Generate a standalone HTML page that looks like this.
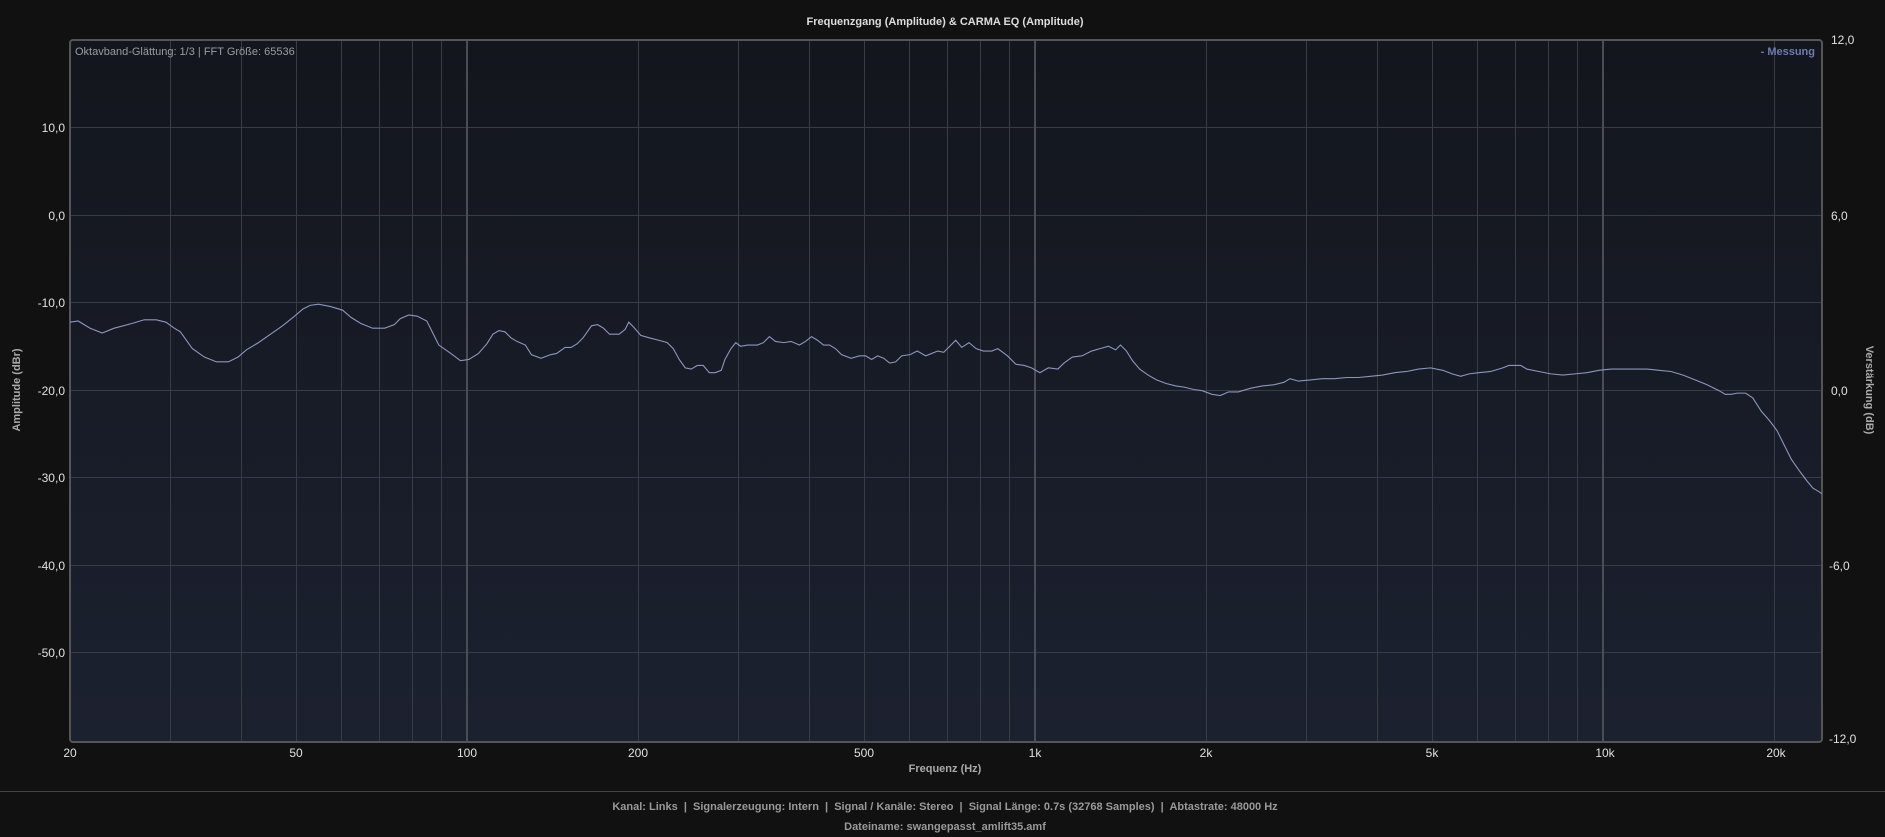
<!DOCTYPE html>
<html><head><meta charset="utf-8"><style>
html,body{margin:0;padding:0;background:#111111;width:1885px;height:837px;overflow:hidden;font-family:"Liberation Sans",sans-serif}
svg{position:absolute;left:0;top:0}
</style></head><body>
<svg width="1885" height="837" viewBox="0 0 1885 837" xmlns="http://www.w3.org/2000/svg">
<defs>
<linearGradient id="bg" x1="0" y1="0" x2="0" y2="1"><stop offset="0" stop-color="#13161d"/><stop offset="1" stop-color="#1c2130"/></linearGradient>
<clipPath id="cp"><rect x="70" y="40" width="1752" height="702"/></clipPath>
</defs>
<rect x="70" y="40" width="1752" height="702" rx="3" fill="url(#bg)"/>
<g stroke="#383c45" stroke-width="1">
<path d="M170.5 40V742M241.5 40V742M296.5 40V742M341.5 40V742M379.5 40V742M412.5 40V742M441.5 40V742M638.5 40V742M738.5 40V742M809.5 40V742M864.5 40V742M909.5 40V742M947.5 40V742M980.5 40V742M1009.5 40V742M1206.5 40V742M1306.5 40V742M1377.5 40V742M1432.5 40V742M1477.5 40V742M1515.5 40V742M1548.5 40V742M1577.5 40V742M1774.5 40V742"/>
<path d="M70 127.5H1822M70 215.5H1822M70 302.5H1822M70 390.5H1822M70 477.5H1822M70 565.5H1822M70 652.5H1822"/>
</g>
<g stroke="#4a4d55" stroke-width="2"><path d="M467 40V742M1035 40V742M1603 40V742"/></g>
<rect x="70" y="40" width="1752" height="702" rx="3" fill="none" stroke="#555" stroke-width="2"/>
<g clip-path="url(#cp)">
<polyline transform="scale(1.2022)" fill="none" stroke="#8e95bd" stroke-width="1.1" vector-effect="non-scaling-stroke" points="58,268 65,267 75,273 85,277 95,273 110,269 120,266 130,266 138,268 145,273 150,276 155,283 160,290 170,297 180,301 190,301 198,297 205,291 215,285 225,278 235,271 245,263 252,257 258,254 265,253 275,255 285,258 292,264 300,269 310,273 320,273 328,270 333,265 340,262 347,263 355,267 360,277 365,287 375,294 383,300 390,299 398,294 405,286 410,278 415,275 420,276 425,281 430,284 437,287 442,295 450,298 458,295 463,294 470,289 475,289 480,286 485,281 492,271 497,270 502,273 507,278 515,278 520,274 523,268 527,272 533,279 540,281 548,283 555,285 560,290 565,299 570,306 575,307 580,304 585,304 590,310 595,310 600,308 603,299 608,290 612,285 616,288 622,287 630,287 635,285 640,280 645,284 652,285 658,284 665,287 670,284 675,280 680,283 685,287 690,287 695,290 700,295 708,298 715,296 720,296 725,299 730,296 735,298 740,302 745,301 750,296 757,295 763,292 770,296 775,294 780,292 785,293 790,288 795,283 800,289 806,285 812,290 818,292 825,292 830,290 838,296 845,303 852,304 858,306 865,310 872,306 880,307 885,302 892,297 900,296 908,292 915,290 922,288 928,291 932,287 937,292 942,300 948,307 955,312 962,316 970,319 978,321 985,322 993,324 1000,325 1008,328 1015,329 1022,326 1030,326 1040,323 1050,321 1060,320 1068,318 1073,315 1080,317 1090,316 1100,315 1110,315 1120,314 1130,314 1140,313 1150,312 1160,310 1170,309 1180,307 1190,306 1200,308 1208,311 1215,313 1222,311 1230,310 1240,309 1250,306 1255,304 1265,304 1270,307 1280,309 1290,311 1300,312 1310,311 1320,310 1330,308 1340,307 1350,307 1360,307 1370,307 1380,308 1390,309 1400,312 1410,316 1420,320 1430,325 1435,328 1440,328 1445,327 1452,327 1458,331 1465,342 1472,350 1478,358 1483,368 1490,382 1497,392 1503,400 1508,406 1513,409 1516,411"/>
</g>
<text x="75" y="55" font-size="11" fill="#9a9ca2">Oktavband-Glättung: 1/3 | FFT Größe: 65536</text>
<text x="1815" y="55" font-size="11" font-weight="bold" fill="#6f7ab0" text-anchor="end">- Messung</text>
<text x="945" y="25" font-size="11" font-weight="bold" fill="#dddddd" text-anchor="middle">Frequenzgang (Amplitude) &amp; CARMA EQ (Amplitude)</text>
<g font-size="12" fill="#e0e0e0" text-anchor="end">
<text x="65" y="132">10,0</text><text x="65" y="220">0,0</text><text x="65" y="307">-10,0</text><text x="65" y="395">-20,0</text><text x="65" y="482">-30,0</text><text x="65" y="570">-40,0</text><text x="65" y="657">-50,0</text>
</g>
<g font-size="12" fill="#e0e0e0">
<text x="1831" y="44">12,0</text><text x="1831" y="220">6,0</text><text x="1831" y="395">0,0</text><text x="1829" y="570">-6,0</text><text x="1829" y="743">-12,0</text>
</g>
<g font-size="12" fill="#e0e0e0" text-anchor="middle">
<text x="70" y="757">20</text><text x="296" y="757">50</text><text x="467" y="757">100</text><text x="638" y="757">200</text><text x="864" y="757">500</text><text x="1035" y="757">1k</text><text x="1206" y="757">2k</text><text x="1432" y="757">5k</text><text x="1605" y="757">10k</text><text x="1776" y="757">20k</text>
</g>
<text x="945" y="772" font-size="11" font-weight="bold" fill="#aaaaaa" text-anchor="middle">Frequenz (Hz)</text>
<text transform="translate(20,390) rotate(-90)" font-size="11" font-weight="bold" fill="#aaaaaa" text-anchor="middle">Amplitude (dBr)</text>
<text transform="translate(1866,390) rotate(90)" font-size="11" font-weight="bold" fill="#aaaaaa" text-anchor="middle">Verstärkung (dB)</text>
<rect x="0" y="791" width="1885" height="1" fill="#444"/>
<text x="945" y="810" font-size="11" font-weight="bold" fill="#999999" text-anchor="middle" xml:space="preserve">Kanal: Links  |  Signalerzeugung: Intern  |  Signal / Kanäle: Stereo  |  Signal Länge: 0.7s (32768 Samples)  |  Abtastrate: 48000 Hz</text>
<text x="945" y="830" font-size="11" font-weight="bold" fill="#999999" text-anchor="middle">Dateiname: swangepasst_amlift35.amf</text>
</svg>
</body></html>
